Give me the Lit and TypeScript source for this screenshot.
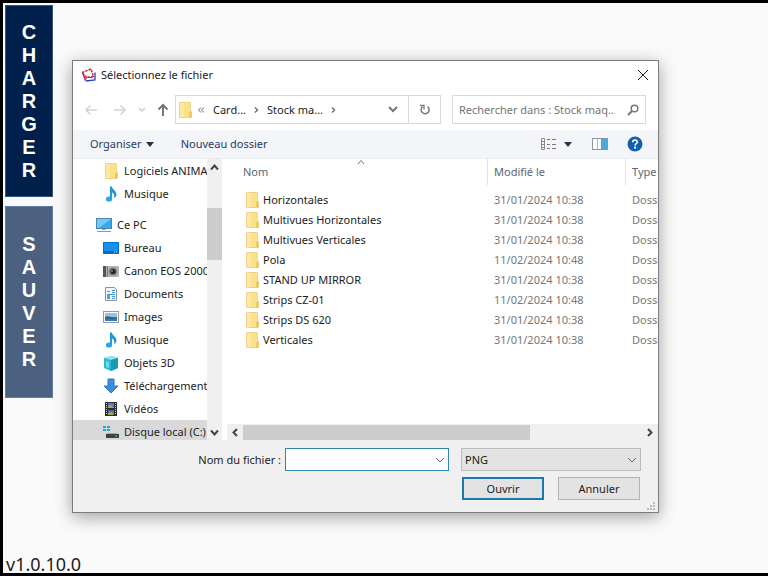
import { LitElement, html, css, svg, nothing } from "lit";
import { customElement } from "lit/decorators.js";

const icon = (w: number, h: number, body: unknown) =>
  html`<svg class="icon" width=${w} height=${h} viewBox="0 0 ${w} ${h}" aria-hidden="true">${body}</svg>`;

const stroke = (w: number, h: number, d: string, color: string, width = 1) =>
  icon(w, h, svg`<path d=${d} fill="none" stroke=${color} stroke-width=${width} />`);

const folderShape = svg`
    <path d="M0.500 0.500h11v8l1 1v6h-12z" fill="#fce08a" stroke="#ecd488" />
    <path d="M10.500 15v-4.500l1.500-1V15z" fill="#f3cd5c" stroke="#e3c05c" stroke-width="0.600" />
    <path d="M1 1h4v14H1z" fill="#fde9a4" />`;

const folder = () => icon(14, 16, folderShape);

const treeFolder = () => icon(16, 16, svg`<g transform="translate(2 0)">${folderShape}</g>`);

const music = () =>
  icon(16, 16, svg`
    <path d="M7 0.500h2c0 3 4.500 4 4.500 8 0 1.500-1 3-2.500 3.500 1-3-0.500-5-2-5.500v6.500H7z" fill="#1f9ad6" />
    <ellipse cx="6" cy="13" rx="3.200" ry="2.600" fill="#2ba6e0" />`);

const pc = () =>
  icon(16, 16, svg`
    <rect x="0.5" y="1.5" width="15" height="10" fill="#3aa7ea" stroke="#4a86b0" />
    <path d="M1 2h14L3 11H1z" fill="#74c8f6" />
    <path d="M6 12h4v1H6z" fill="#9ab" /><path d="M1 14h14v1H1z" fill="#7f9db5" />`);

const desktop = () =>
  icon(16, 16, svg`
    <rect x="0.5" y="2.5" width="15" height="11" fill="#1391f0" stroke="#0b6fc4" />
    <path d="M1 11h14v2H1z" fill="#0c63b8" /><path d="M11 12h1M13 12h1" stroke="#fff" />`);

const camera = () =>
  icon(16, 16, svg`
    <rect x="0" y="3" width="16" height="11" rx="1" fill="#b4b4b4" />
    <rect x="0" y="3" width="3" height="11" fill="#555" /><rect x="4" y="3" width="1" height="11" fill="#777" />
    <circle cx="10" cy="8.5" r="4" fill="#777" /><circle cx="10" cy="8.5" r="2.5" fill="#222" />
    <circle cx="9" cy="8" r="1" fill="#789" />`);

const documents = () =>
  icon(16, 16, svg`
    <path d="M2.500 1.500h9l2 2v11h-11z" fill="#f4f8fb" stroke="#8b9299" />
    <path d="M4 5.500h3M9 4.500h3M9 6.500h3M4 8.500h8M9 10.500h3M9 12.500h3M4 12.500h3" stroke="#3d97cc" />
    <path d="M4 9h3v3H4z" fill="#55acd8" />`);

const images = () =>
  icon(16, 16, svg`
    <rect x="0.5" y="2.500" width="15" height="11" fill="#fff" stroke="#9a9a9a" />
    <rect x="2" y="4" width="12" height="8" fill="#8cc5ea" />
    <path d="M2 8c3-2 5 1 12 0v4H2z" fill="#35657f" /><path d="M2 10h12v2H2z" fill="#2f7eb5" />`);

const cube = () =>
  icon(16, 16, svg`
    <path d="M1 3l7-2 7 2v10l-7 3-7-3z" fill="#2bb8d2" />
    <path d="M1 3l7-2 7 2-7 2z" fill="#8fe6f2" /><path d="M8 5l7-2v10l-7 3z" fill="#149bb6" />
    <path d="M3 6l3 1v6l-3-1z" fill="#6fdcea" />`);

const download = () =>
  icon(16, 16, svg`<path d="M5 1h6v7h4l-7 7-7-7h4z" fill="#3b8ede" stroke="#2f78c4" />`);

const video = () =>
  icon(16, 16, svg`
    <rect x="2" y="1" width="12" height="14" fill="#2c2c30" />
    <path d="M3.500 2v12M12.500 2v12" stroke="#c9c9c9" stroke-dasharray="1 1" />
    <rect x="5" y="2" width="6" height="5" fill="#4a7fc0" /><rect x="5" y="9" width="6" height="5" fill="#4973a8" />
    <path d="M5 5l3-1 3 3H5zM5 12l4-1 2 3H5z" fill="#b8a04a" />`);

const drive = () =>
  icon(16, 16, svg`
    <path d="M0 2h3v2H0zM4 2h3v2H4zM0 5h3v2H0zM4 5h3v2H4z" fill="#18a9e0" />
    <path d="M4 9h10l1 2H3z" fill="#aaa" /><rect x="3" y="10" width="13" height="4" fill="#3c4246" />
    <path d="M12 12h2" stroke="#5fd36a" />`);

const TREE = [
  { name: "Logiciels ANIMA", glyph: treeFolder },
  { name: "Musique", glyph: music },
  { name: "Ce PC", glyph: pc, root: true },
  { name: "Bureau", glyph: desktop },
  { name: "Canon EOS 2000", glyph: camera },
  { name: "Documents", glyph: documents },
  { name: "Images", glyph: images },
  { name: "Musique", glyph: music },
  { name: "Objets 3D", glyph: cube },
  { name: "Téléchargements", glyph: download },
  { name: "Vidéos", glyph: video },
  { name: "Disque local (C:)", glyph: drive, selected: true },
];

const FILES = [
  ["Horizontales", "31/01/2024 10:38"],
  ["Multivues Horizontales", "31/01/2024 10:38"],
  ["Multivues Verticales", "31/01/2024 10:38"],
  ["Pola", "11/02/2024 10:48"],
  ["STAND UP MIRROR", "31/01/2024 10:38"],
  ["Strips CZ-01", "11/02/2024 10:48"],
  ["Strips DS 620", "31/01/2024 10:38"],
  ["Verticales", "31/01/2024 10:38"],
];

const base = css`
  * { box-sizing: border-box; }
  button, input, select { font: inherit; color: inherit; margin: 0; }
  button { padding: 0; border: 0; background: none; display: flex; align-items: center; white-space: nowrap; }
  .icon { display: block; flex: none; }
`;

@customElement("file-dialog")
export class FileDialog extends LitElement {
  static styles = [base, css`
    :host {
      display: block;
      background: #fff;
      border: 1px solid #7c7c7c;
      box-shadow: 0 4px 16px rgba(0, 0, 0, 0.36);
      font: 11px/16px "Noto Sans", "Open Sans", sans-serif;
      color: #1c1c1c;
    }
    .title { display: flex; align-items: center; height: 28px; padding: 0 9px 0 8px; gap: 5px; }
    .title h1 { flex: 1; margin: 0; font-size: 11px; font-weight: 400; }
    .nav { display: flex; align-items: center; height: 41px; padding: 0 12px 0 11px; }
    .arrows { display: flex; align-items: center; gap: 15px; width: 91px; }
    .arrows .history { margin: 0 -4px; }
    .address { flex: 1; display: flex; align-items: center; height: 29px; border: 1px solid #d9d9d9; padding-left: 3px; min-width: 0; }
    .crumbs { flex: 1; display: flex; align-items: center; gap: 8px; padding-left: 4px; }
    .refresh { width: 32px; height: 27px; justify-content: center; border-left: 1px solid #d9d9d9; margin-left: 10px; }
    .search { width: 194px; display: flex; align-items: center; height: 29px; margin-left: 11px; border: 1px solid #d9d9d9; padding: 0 6px; }
    .search input { flex: 1; min-width: 0; border: 0; padding: 0; outline: 0; background: none; }
    .search input::placeholder { color: #757575; opacity: 1; }
    .tools { display: flex; align-items: center; height: 29px; padding: 0 15px 0 17px; background: #f3f5f9; border-bottom: 1px solid #e8eaee; color: #2a3a5c; }
    .tools button { gap: 4px; }
    .new { flex: 1; margin-left: 27px; }
    .view { margin-right: 20px; }
    .preview { margin-right: 19px; }
    .body { display: flex; height: 281px; }
    .tree { width: 134px; margin: 0; padding: 0; list-style: none; overflow: hidden; }
    .tree button { width: 100%; height: 23px; padding-left: 30px; gap: 5px; }
    .tree .root { margin-top: 8px; }
    .tree .root button { padding-left: 23px; gap: 5px; }
    .tree .selected { background: #d9d9d9; }
    .vbar { width: 15px; display: flex; flex-direction: column; align-items: center; background: #f0f0f0; padding: 5px 0 4px; }
    .vthumb { width: 15px; height: 52px; margin-top: 37px; background: #cdcdcd; }
    .vbar .down { margin-top: auto; }
    .pane { flex: 1; min-width: 0; margin-left: 5px; display: flex; flex-direction: column; justify-content: space-between; }
    .list { padding-left: 10px; overflow: hidden; }
    table { width: 480px; table-layout: fixed; border-collapse: separate; border-spacing: 0; }
    .name { width: 251px; }
    .date { width: 138px; }
    th { position: relative; height: 26px; padding: 0 6px; text-align: left; font-weight: 400; color: #5a6577; border-right: 1px solid #e2e2e2; }
    tbody::before { content: ""; display: block; height: 5px; }
    td { height: 20px; padding: 0 6px; color: #777; white-space: nowrap; }
    .entry { display: flex; align-items: center; gap: 3px; padding-left: 3px; color: #1c1c1c; }
    .sort { position: absolute; top: 0; left: 48%; }
    .hbar { display: flex; align-items: center; height: 16px; padding: 0 5px; background: #f0f0f0; }
    .track { flex: 1; height: 15px; margin: 0 5px; }
    .hthumb { width: 72%; height: 100%; background: #cdcdcd; }
    .foot { position: relative; display: grid; grid-template-columns: 1fr 164px 180px; grid-template-rows: 23px 23px; gap: 6px 12px; padding: 8px 17px 12px 0; background: #f0f0f0; }
    .foot label { justify-self: end; align-self: center; margin-right: -8px; }
    .combo { position: relative; display: flex; }
    .combo .icon { position: absolute; right: 4px; top: 9px; pointer-events: none; }
    .combo input { width: 100%; border: 1px solid #2f86b0; background: #fff; padding: 0 20px 0 4px; outline: 0; }
    .combo select { width: 100%; appearance: none; border: 1px solid #bcbcbc; border-radius: 0; background: #e3e3e3; padding: 0 20px 0 3px; }
    .actions { grid-column: 3; display: grid; grid-template-columns: 1fr 1fr; gap: 14px; padding: 0 1px; }
    .actions button { justify-content: center; border: 1px solid #b4b4b4; background: #e3e3e3; }
    .actions .open { border: 2px solid #1e79a8; }
    .grip { position: absolute; right: 2px; bottom: 1px; }
  `];

  render() {
    const sep = () => stroke(5, 8, "M1 1.500l2.500 2.500L1 6.500", "#666", 1.3);
    const caret = () => icon(8, 5, svg`<path d="M0 0h8L4 5z" fill="#263247" />`);
    const chevron = () => stroke(10, 7, "M1 1l4 4 4-4", "#666");
    return html`
      <header class="title">
        ${icon(15, 14, svg`
          <path d="M1 4.500l9-3.500 2.500 7.500-7 1z" fill="#fff" stroke="#e0202c" stroke-width="1.500" stroke-dasharray="2.500 1" />
          <path d="M1.500 4l3 8.500" stroke="#b02858" stroke-width="1.500" />
          <path d="M4 12.500l2-3h5.500" fill="none" stroke="#a03070" />
          <path d="M5 13l9-1V4.500" fill="none" stroke="#2840c0" stroke-width="1.300" />`)}
        <h1>Sélectionnez le fichier</h1>
        <button aria-label="Fermer">${stroke(12, 12, "M1 1l10 10M11 1L1 11", "#222")}</button>
      </header>
      <div class="nav">
        <div class="arrows">
          <button aria-label="Précédent">${stroke(14, 12, "M13 6H2M6.500 1.500L2 6l4.500 4.500", "#d4d4d4", 1.5)}</button>
          <button aria-label="Suivant">${stroke(14, 12, "M1 6h11M7.500 1.500L12 6l-4.500 4.500", "#d4d4d4", 1.5)}</button>
          <button class="history" aria-label="Emplacements récents">${stroke(8, 6, "M1 1l3 3 3-3", "#ccc", 1.5)}</button>
          <button aria-label="Dossier parent">${stroke(12, 14, "M6 13V2M1.500 6.500L6 2l4.500 4.500", "#777", 2)}</button>
        </div>
        <div class="address">
          ${folder()}
          <nav class="crumbs" aria-label="Chemin">
            ${stroke(8, 8, "M4 1.500L1.500 4 4 6.500M7 1.500L4.500 4 7 6.500", "#666")}
            <button>Card...</button>${sep()}<button>Stock ma...</button>${sep()}
          </nav>
          <button aria-label="Historique">${stroke(10, 7, "M1 1l4 4 4-4", "#777", 2)}</button>
          <button class="refresh" aria-label="Actualiser">
            ${icon(12, 12, svg`<path d="M8.500 2.500A4 4 0 1 1 3.500 2.700" fill="none" stroke="#777" stroke-width="1.500" /><path d="M5 5.500V1.500H1" fill="none" stroke="#777" stroke-width="1.300" />`)}
          </button>
        </div>
        <div class="search">
          <input type="search" aria-label="Rechercher" placeholder="Rechercher dans : Stock maq..." />
          ${icon(12, 12, svg`<circle cx="7.500" cy="4.500" r="3.300" fill="none" stroke="#777" stroke-width="1.500" /><path d="M5 7L1 11" stroke="#777" stroke-width="2" />`)}
        </div>
      </div>
      <div class="tools">
        <button>Organiser ${caret()}</button>
        <button class="new">Nouveau dossier</button>
        <button class="view" aria-label="Affichage">
          ${icon(20, 14, svg`
            <path d="M1.500 1.500h3v11h-3zM2 4.500h3M2 7.500h3M2 10.500h3" fill="none" stroke="#8a8a8a" />
            <path d="M7 2.500h3M12 2.500h4M7 7.500h3M12 7.500h4M7 11.500h3M12 11.500h4" stroke="#777" />`)}
          ${caret()}
        </button>
        <button class="preview" aria-label="Volet de visualisation">
          ${icon(16, 12, svg`<rect x="0.500" y="0.500" width="15" height="11" fill="#fff" stroke="#8a97a3" /><path d="M5.500 1v10" stroke="#b0b8c0" /><rect x="9" y="1" width="6" height="10" fill="#4ba9e0" />`)}
        </button>
        <button aria-label="Aide">
          ${icon(16, 16, svg`<circle cx="8" cy="8" r="7.500" fill="#1160b0" /><path d="M5.700 6.200C5.700 3.200 10.300 3.300 10.300 6c0 1.700-2.200 1.700-2.200 3.500" fill="none" stroke="#fff" stroke-width="1.600" /><circle cx="8.100" cy="11.700" r="1.100" fill="#fff" />`)}
        </button>
      </div>
      <div class="body">
        <ul class="tree">
          ${TREE.map((n) => html`<li class=${n.root ? "root" : n.selected ? "selected" : nothing}><button>${n.glyph()}${n.name}</button></li>`)}
        </ul>
        <div class="vbar">
          ${stroke(9, 7, "M1 5.500l3.500-4 3.500 4", "#444", 2)}
          <div class="vthumb"></div>
          <span class="down">${stroke(9, 7, "M1 1.500l3.500 4 3.500-4", "#444", 2)}</span>
        </div>
        <div class="pane">
          <div class="list">
            <table>
              <thead>
                <tr>
                  <th class="name">Nom<span class="sort">${stroke(8, 6, "M1 5l3-3.500L7 5", "#777")}</span></th>
                  <th class="date">Modifié le</th>
                  <th>Type</th>
                </tr>
              </thead>
              <tbody>
                ${FILES.map(([name, date]) => html`<tr><td><span class="entry">${folder()}${name}</span></td><td>${date}</td><td>Dossi</td></tr>`)}
              </tbody>
            </table>
          </div>
          <div class="hbar">
            ${stroke(6, 9, "M5 1L1.500 4.500 5 8", "#444", 2)}
            <div class="track"><div class="hthumb"></div></div>
            ${stroke(6, 9, "M1 1l3.500 3.500L1 8", "#444", 2)}
          </div>
        </div>
      </div>
      <form class="foot" @submit=${(e: Event) => e.preventDefault()}>
        <label for="file">Nom du fichier :</label>
        <div class="combo"><input id="file" type="text" />${chevron()}</div>
        <div class="combo"><select aria-label="Type de fichier"><option>PNG</option></select>${chevron()}</div>
        <div class="actions">
          <button class="open" type="submit">Ouvrir</button>
          <button type="button">Annuler</button>
        </div>
        <span class="grip">${icon(9, 9, svg`<path d="M6 0h2v2H6zM3 3h2v2H3zM6 3h2v2H6zM0 6h2v2H0zM3 6h2v2H3zM6 6h2v2H6z" fill="#bbb" />`)}</span>
      </form>
    `;
  }
}

@customElement("app-root")
export class AppRoot extends LitElement {
  static styles = [base, css`
    :host {
      box-sizing: border-box;
      display: flex;
      flex-direction: column;
      min-height: 100vh;
      border: solid #000;
      border-width: 3px 0 3px 3px;
      background: #fafafa;
      overflow: hidden;
    }
    .main { display: flex; align-items: flex-start; padding: 2px 0 0 2px; }
    .side { display: flex; flex-direction: column; gap: 9px; }
    .side button {
      width: 48px;
      height: 192px;
      justify-content: center;
      border: 1px solid #2f5582;
      background: #001f4a;
      color: #fff;
      font: bold 20px/23px "Liberation Sans", Arial, sans-serif;
    }
    .side .save { background: #4c6180; border-color: #5f7ea6; }
    .word { width: 1em; text-align: center; white-space: normal; word-break: break-all; }
    file-dialog { flex: 1; min-width: 0; margin: 55px 109px 0 19px; }
    .version { margin: auto 0 0; padding-left: 3px; font: 18px/18px "Noto Sans", "Open Sans", sans-serif; color: #222; }
  `];

  render() {
    return html`
      <div class="main">
        <div class="side">
          <button><span class="word">CHARGER</span></button>
          <button class="save"><span class="word">SAUVER</span></button>
        </div>
        <file-dialog></file-dialog>
      </div>
      <p class="version">v1.0.10.0</p>
    `;
  }
}
